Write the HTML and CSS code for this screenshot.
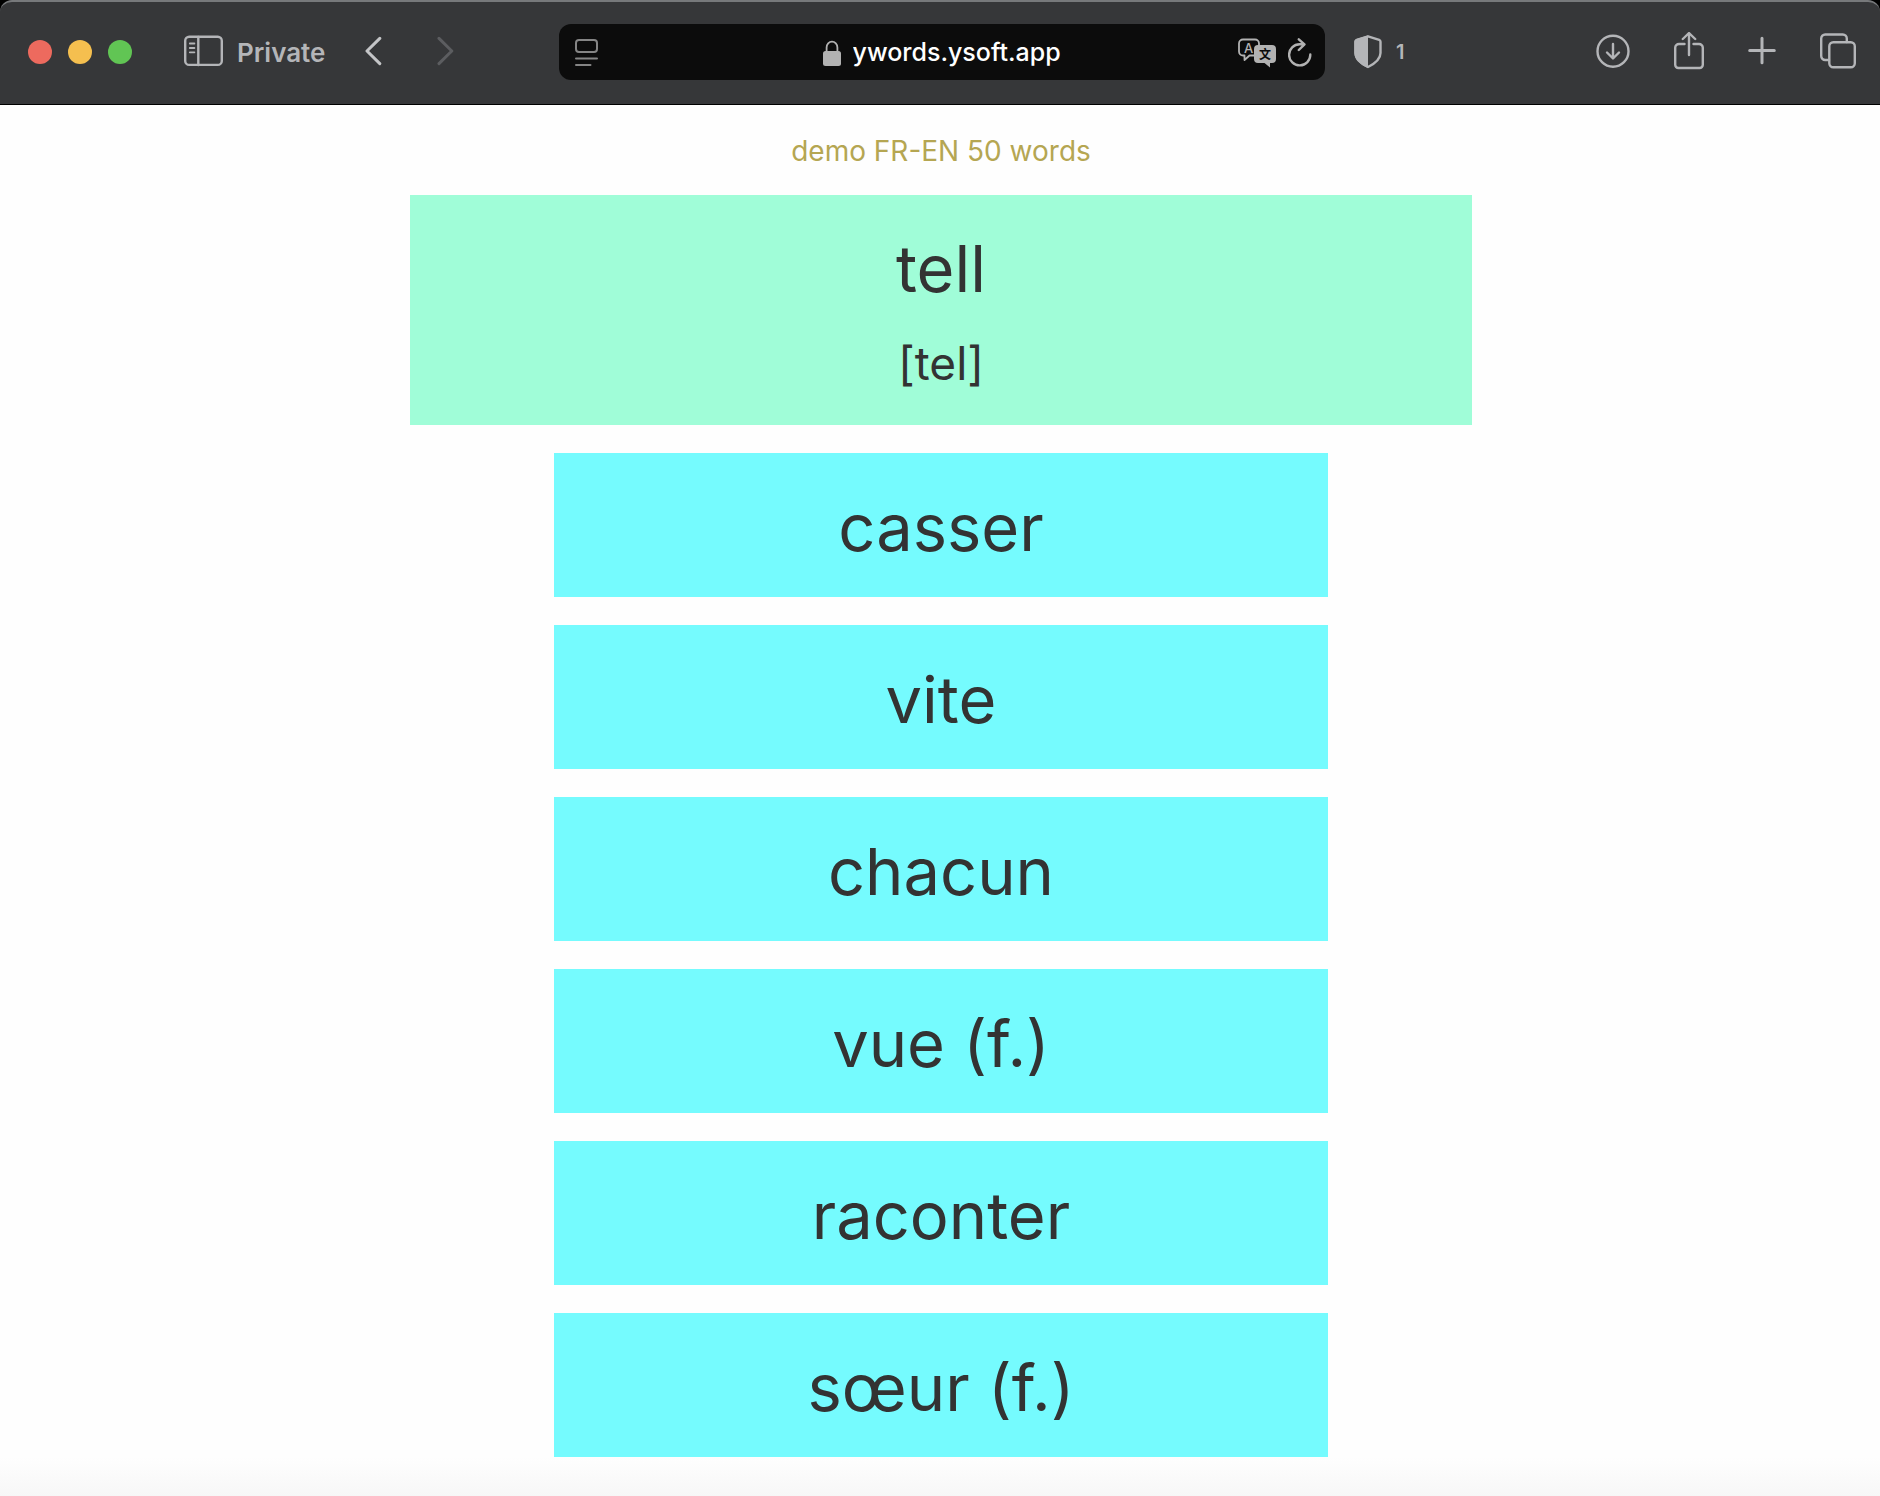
FILE: index.html
```html
<!DOCTYPE html>
<html lang="en">
<head>
    <meta charset="UTF-8">
    <meta name="viewport" content="width=device-width, initial-scale=1.0">
    <title>ywords</title>
    <link rel="stylesheet" href="styles.css">
</head>
<body>
    <div class="top">
        <header class="toolbar">
            <div class="left">
                <div class="lights">
                    <button class="light red" aria-label="Close"></button>
                    <button class="light yellow" aria-label="Minimize"></button>
                    <button class="light green" aria-label="Zoom"></button>
                </div>
                <button class="btn sidebarBtn">
                    <svg class="icon" width="39" height="40" viewBox="0 0 39 40">
                        <rect x="1.2" y="4.7" width="36.6" height="28.2" rx="4"/>
                        <path d="M14.3 5v28"/>
                        <path class="thin" d="M5.8 11.5h4.6M5.8 16h4.6M5.8 20.300h4.6"/>
                    </svg>
                    <span class="private">Private</span>
                </button>
                <button class="btn backBtn" aria-label="Back">
                    <svg class="icon bold" width="17" height="40" viewBox="0 0 17 40"><path d="M14.800 6.400L2 19l12.800 12.600"/></svg>
                </button>
                <button class="btn forwardBtn" aria-label="Forward" disabled>
                    <svg class="icon bold" width="17" height="40" viewBox="0 0 17 40"><path d="M2 6.400L14.800 19 2 31.600"/></svg>
                </button>
            </div>

            <div class="address">
                <button class="btn reader" aria-label="Show reader">
                    <svg class="icon" width="23" height="40" viewBox="0 0 23 40">
                        <rect x="1" y="8" width="21" height="12" rx="3"/>
                        <path d="M1 26.500h21M1 33h14.500"/>
                    </svg>
                </button>
                <label class="site">
                    <svg class="icon" width="18" height="40" viewBox="0 0 18 40" role="img" aria-label="Address">
                        <rect class="fill" x="0" y="19" width="18" height="15" rx="2.500"/>
                        <path class="line" d="M3.600 20v-4.500a5.400 5.800 0 0 1 10.800 0V20"/>
                    </svg>
                    <input class="url" type="text" value="ywords.ysoft.app">
                </label>
                <div class="tools">
                    <button class="btn" aria-label="Translate">
                        <svg class="icon" width="38" height="40" viewBox="0 0 38 40">
                            <path class="line" d="M21 13v-1.500a4 4 0 0 0-4-4H5a4 4 0 0 0-4 4v8a4 4 0 0 0 4 4h1.500v4.500l5-4.500H16"/>
                            <text class="letter" x="10.500" y="20.500">A</text>
                            <path class="fill" d="M20 13h14a4 4 0 0 1 4 4v10a4 4 0 0 1-4 4h-2v4.500L26.500 31H20a4 4 0 0 1-4-4V17a4 4 0 0 1 4-4z"/>
                            <text class="hanzi" x="27" y="26.500">文</text>
                        </svg>
                    </button>
                    <button class="btn" aria-label="Reload">
                        <svg class="icon" width="24" height="40" viewBox="0 0 24 40">
                            <path d="M22.300 22.500a10.600 10.600 0 1 1-10.600-10.300h4.300M10.800 7.300l5.700 5-5.700 5.700"/>
                        </svg>
                    </button>
                </div>
            </div>

            <div class="right">
                <button class="btn shieldBtn">
                    <svg class="icon" width="28" height="40" viewBox="0 0 28 40" role="img" aria-label="Blocker">
                        <path d="M14 4.300l11.200 3.500a2 2 0 0 1 1.300 1.900V21c0 6-5.500 10.500-12.500 14C7 31.500 1.500 27 1.500 21V9.700a2 2 0 0 1 1.300-1.900z"/>
                        <path class="fill" d="M14 3.500L2.300 7A3 3 0 0 0 .3 9.800V21c0 7 6 11.500 13.700 15z"/>
                    </svg>
                    <span class="count">1</span>
                </button>
                <div class="actions">
                    <button class="btn" aria-label="Downloads">
                        <svg class="icon" width="34" height="40" viewBox="0 0 34 40">
                            <circle cx="17" cy="19.200" r="15.500"/>
                            <path d="M17 12v14M11 20.500l6 6 6-6"/>
                        </svg>
                    </button>
                    <button class="btn" aria-label="Share">
                        <svg class="icon" width="30" height="40" viewBox="0 0 30 40">
                            <path d="M10.500 12H5a3.800 3.800 0 0 0-3.800 3.800v17A3.200 3.200 0 0 0 4.400 36h21.200a3.200 3.200 0 0 0 3.200-3.200v-17A3.800 3.800 0 0 0 25 12h-5.500M15 23V1.500M8.800 7L15 1l6.200 6"/>
                        </svg>
                    </button>
                    <button class="btn" aria-label="New tab">
                        <svg class="icon bold" width="28" height="40" viewBox="0 0 28 40"><path d="M14 6.300v24.400M1.700 18.500h24.600"/></svg>
                    </button>
                    <button class="btn" aria-label="Tab overview">
                        <svg class="icon" width="36" height="40" viewBox="0 0 36 40">
                            <path d="M9 28H5.200A4 4 0 0 1 1.200 24V6.500a4 4 0 0 1 4-4h17.600a4 4 0 0 1 4 4V10"/>
                            <rect x="9.300" y="10.200" width="25.500" height="25" rx="4"/>
                        </svg>
                    </button>
                </div>
            </div>
        </header>
    </div>

    <main class="page">
        <h2 class="title">demo FR-EN 50 words</h2>
        <div class="question">
            <div class="word">tell</div>
            <div class="sound">[tel]</div>
        </div>
        <div class="answers">
            <button class="answer">casser</button>
            <button class="answer">vite</button>
            <button class="answer">chacun</button>
            <button class="answer">vue (f.)</button>
            <button class="answer">raconter</button>
            <button class="answer">sœur (f.)</button>
        </div>
    </main>
    <footer class="bottom"></footer>
</body>
</html>
```

FILE: styles.css
```css
*{
    margin: 0;
    padding: 0;
    box-sizing: border-box;
}
body {
    display: flex;
    flex-direction: column;
    min-height: 100vh;
    background-color: #fefefe;
    color: #333;
    font-family: Inter, "Liberation Sans", sans-serif;
}
button {
    border: none;
    background: none;
    color: inherit;
    font: inherit;
    cursor: pointer;
}
/* browser bar */
.top {
    background-color: #000;
}
.toolbar {
    display: grid;
    grid-template-columns: 1fr minmax(0, 766px) 1fr;
    align-items: center;
    height: 105px;
    padding: 0 24px 2px 28px;
    border-top: solid 2px #77797b;
    border-bottom: solid 1px #000;
    border-radius: 12px 12px 0 0;
    background-color: #363739;
    color: #b4b5b8;
}
.left, .right, .lights, .tools, .actions, .site {
    display: flex;
    align-items: center;
}
.lights {
    gap: 16px;
}
.light {
    width: 24px;
    height: 24px;
    border-radius: 50%;
}
.red {
    background-color: #ed6a5e;
}
.yellow {
    background-color: #f5bf4f;
}
.green {
    background-color: #61c554;
}
.btn {
    display: flex;
    align-items: center;
}
.icon {
    display: block;
    fill: none;
    stroke: currentColor;
    stroke-width: 2.4;
    stroke-linecap: round;
    stroke-linejoin: round;
}
.bold {
    stroke-width: 3;
}
.thin, .line {
    stroke-width: 1.8;
}
.fill {
    fill: currentColor;
    stroke: none;
}
.sidebarBtn {
    gap: 14px;
    margin-left: 52px;
}
.private {
    font-size: 26px;
    font-weight: 600;
}
.backBtn {
    margin-left: 40px;
    color: #c4c5c7;
}
.forwardBtn {
    margin-left: 55px;
    color: #5c5d60;
}
.address {
    display: grid;
    grid-template-columns: 1fr auto 1fr;
    align-items: center;
    height: 56px;
    padding: 0 13px 0 16px;
    border-radius: 12px;
    background-color: #0c0c0c;
    color: #b2b2b2;
}
.reader {
    color: #858585;
}
.reader .icon {
    stroke-width: 2;
}
.site {
    gap: 12px;
}
.url {
    width: 212px;
    border: none;
    outline: none;
    background: none;
    color: #fff;
    font: 500 25px Inter, "Liberation Sans", sans-serif;
}
.tools {
    justify-content: flex-end;
    gap: 12px;
}
.letter, .hanzi {
    stroke: none;
    fill: currentColor;
    text-anchor: middle;
    font: 500 13px Inter, sans-serif;
}
.hanzi {
    fill: #0c0c0c;
    font: 700 12px "Noto Sans CJK SC", sans-serif;
}
.right {
    justify-content: space-between;
    padding-left: 29px;
}
.shieldBtn {
    gap: 14px;
}
.count {
    font-size: 20px;
    font-weight: 600;
}
.actions {
    gap: 44px;
}
/* quiz */
.page {
    padding: 29px 0 0 2px;
    text-align: center;
}
.title {
    margin-bottom: 27px;
    color: #b5a652;
    font-size: 28px;
    font-weight: 400;
    line-height: 34px;
}
.question {
    max-width: 1062px;
    margin: auto;
    padding: 28px;
    background-color: #a0fdd8;
}
.word {
    margin-bottom: 14px;
    font-size: 65px;
    line-height: 92px;
}
.sound {
    font-size: 46px;
    line-height: 68px;
}
.answers {
    display: flex;
    flex-direction: column;
    gap: 28px;
    max-width: 774px;
    margin: auto;
    margin-top: 28px;
}
.answer {
    padding: 29px 28px 23px;
    background-color: #75fbfe;
    font-size: 65px;
    line-height: 92px;
}
.bottom {
    flex: 1;
    min-height: 39px;
    background: linear-gradient(#fefefe, #f7f7f7);
}
```
